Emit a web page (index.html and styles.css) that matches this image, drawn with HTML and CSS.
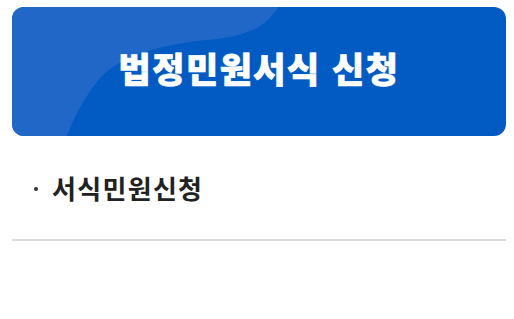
FILE: index.html
```html
<!DOCTYPE html>
<html lang="ko">
<head>
    <meta charset="UTF-8">
    <meta name="viewport" content="width=device-width, initial-scale=1.0">
    <title>법정민원서식 신청</title>
    <link rel="stylesheet" href="styles.css">
</head>
<body>

<div class="wrap">
    <div class="banner">
        <svg class="banner-deco" viewBox="0 0 494 129" preserveAspectRatio="none" aria-hidden="true">
            <path d="M0 0 H266 C256 17 240 28 205 32 C145 37 104 50 84 76 C70 95 61 112 55 129 H0 Z" fill="#2067c8"/>
        </svg>
        <h1>법정민원서식 신청</h1>
    </div>

    <ul class="menu">
        <li><a href="#">서식민원신청</a></li>
    </ul>
</div>

</body>
</html>
```

FILE: styles.css
```css
/* 법정민원서식 */
body {
    margin: 0;
    font-family: "Noto Sans CJK KR", "Noto Sans", sans-serif;
    background-color: #fff;
    color: #222;
}

.wrap {
    padding: 7px 8px 7px 12px;
}

.banner {
    position: relative;
    overflow: hidden;
    height: 129px;
    border-radius: 12px;
    background-color: #015bc2;
    display: flex;
    align-items: center;
    justify-content: center;
}

.banner-deco {
    position: absolute;
    left: 0;
    top: 0;
    width: 100%;
    height: 100%;
}

.banner h1 {
    position: relative;
    margin: 0 0 8px;
    font-size: 35px;
    font-weight: 900;
    letter-spacing: 1.5px;
    color: #fff;
    -webkit-text-stroke: 0.7px #fff;
}

.menu {
    list-style: none;
    margin: 0;
    padding: 34px 0 33px 22px;
    border-bottom: 2px solid #dcdcdc;
}

.menu li {
    display: flex;
    align-items: center;
    line-height: 36px;
    font-size: 26px;
    font-weight: 700;
    letter-spacing: 1.3px;
}

.menu li::before {
    content: "";
    width: 4px;
    height: 4px;
    border-radius: 50%;
    background-color: #333;
    margin: 2px 14px 0 0;
}

.menu a {
    color: #222;
    text-decoration: none;
}
```
